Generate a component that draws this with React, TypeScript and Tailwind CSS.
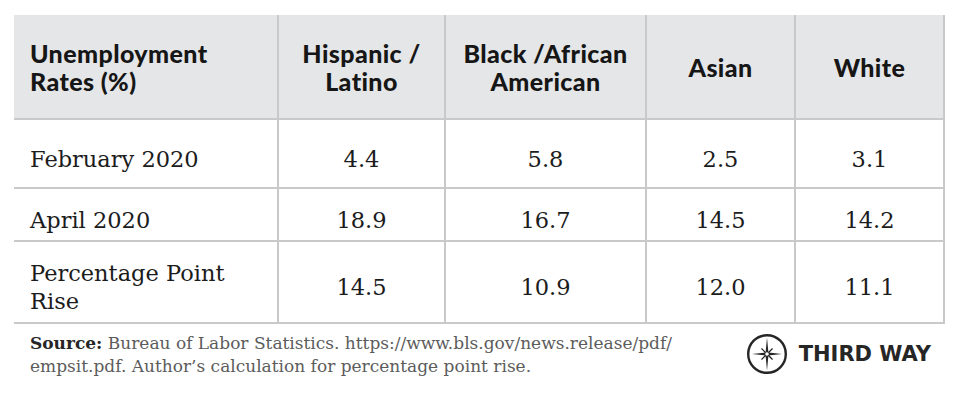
import React from "react";

const head = "font-['Lato',sans-serif] font-black text-[25px] leading-[28px] tracking-[0.4px] text-[#161616]";
const body = "font-['DejaVu_Serif',serif] text-[22.5px] leading-[28px] text-[#1c1c1c] pt-[10px]";

const rows = [
  { label: "February 2020", vals: ["4.4", "5.8", "2.5", "3.1"], h: "h-[69px]" },
  { label: "April 2020", vals: ["18.9", "16.7", "14.5", "14.2"], h: "h-[53px]" },
  { label: "Percentage Point Rise", vals: ["14.5", "10.9", "12.0", "11.1"], h: "h-[82px]" },
];

function Logo() {
  return (
    <svg width="42" height="42" viewBox="0 0 42 42">
      <circle cx="21" cy="21" r="18.8" fill="none" stroke="#262626" strokeWidth="2.4" />
      <path d="M21 4.5 L22.4 19.6 L36 21 L22.4 22.4 L21 37.5 L19.6 22.4 L6 21 L19.6 19.6 Z" fill="#262626" />
      <path d="M21 21 L27 15 L22 21 L27 27 L21 22 L15 27 L20 21 L15 15 Z" fill="#262626" />
      <path d="M21 21 L26.5 15.5 M21 21 L15.5 15.5 M21 21 L26.5 26.5 M21 21 L15.5 26.5" stroke="#262626" strokeWidth="1.2" />
      <circle cx="21" cy="21" r="1.8" fill="#fff" />
    </svg>
  );
}

export default function App() {
  return (
    <div className="w-[960px] h-[412px] bg-white pt-[15px] pl-[14px]">
      <div className="grid grid-cols-[265px_167px_201px_149px_149px] w-[931px]">
        <div className={`h-[105px] bg-[#e5e6e8] border-r-2 border-b-2 border-[#c9c9c9] flex items-center pl-[16px] ${head}`}>
          Unemployment<br />Rates (%)
        </div>
        <div className={`h-[105px] bg-[#e5e6e8] border-r-2 border-b-2 border-[#c9c9c9] flex items-center justify-center text-center ${head}`}>
          Hispanic /<br />Latino
        </div>
        <div className={`h-[105px] bg-[#e5e6e8] border-r-2 border-b-2 border-[#c9c9c9] flex items-center justify-center text-center ${head}`}>
          Black /African<br />American
        </div>
        <div className={`h-[105px] bg-[#e5e6e8] border-r-2 border-b-2 border-[#c9c9c9] flex items-center justify-center text-center ${head}`}>
          Asian
        </div>
        <div className={`h-[105px] bg-[#e5e6e8] border-r-2 border-b-2 border-[#c9c9c9] flex items-center justify-center text-center ${head}`}>
          White
        </div>
        {rows.map((r) => (
          <React.Fragment key={r.label}>
            <div className={`${r.h} border-r-2 border-b-2 border-[#c9c9c9] flex items-center pl-[16px] pr-[20px] ${body}`}>
              {r.label === "Percentage Point Rise" ? (<span>Percentage Point<br />Rise</span>) : r.label}
            </div>
            {r.vals.map((v, i) => (
              <div key={i} className={`${r.h} border-r-2 border-b-2 border-[#c9c9c9] flex items-center justify-center ${body}`}>
                {v}
              </div>
            ))}
          </React.Fragment>
        ))}
      </div>
      <div className="flex items-start justify-between w-[931px] pt-[8px]">
        <p className="pl-[16px] font-['DejaVu_Serif',serif] text-[17px] leading-[23px] text-[#5c5c5c]">
          <span className="font-bold text-[#262626]">Source:</span> Bureau of Labor Statistics. https://www.bls.gov/news.release/pdf/<br />
          empsit.pdf. Author’s calculation for percentage point rise.
        </p>
        <div className="flex items-center gap-[11px] pr-[14px] pt-[1px]">
          <Logo />
          <span className="font-['DejaVu_Sans',sans-serif] font-bold text-[21px] leading-[24px] text-[#262626]">THIRD WAY</span>
        </div>
      </div>
    </div>
  );
}
